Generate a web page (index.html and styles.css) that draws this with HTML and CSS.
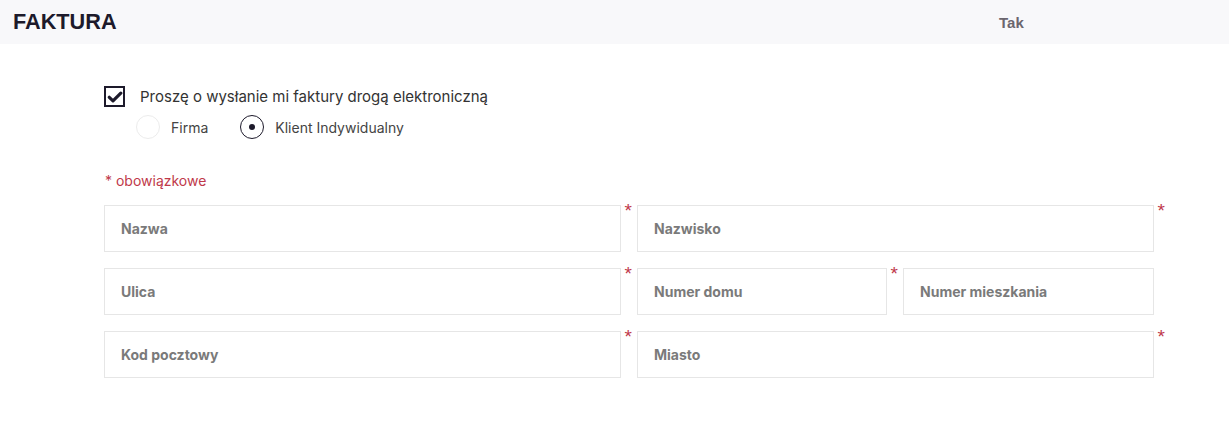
FILE: index.html
```html
<!DOCTYPE html>
<html lang="pl">
<head>
<meta charset="utf-8">
<title>Faktura</title>
<link rel="stylesheet" href="styles.css">
</head>
<body>
<header class="bar">
  <h1 class="bar-title">FAKTURA</h1>
  <span class="bar-value">Tak</span>
</header>
<main class="content">
  <label class="check-row">
    <span class="checkbox">
      <svg viewBox="0 0 16 16" width="16" height="16"><path d="M2.3 8.3 L6 11.8 L13.8 4.2" fill="none" stroke="#1d1a2b" stroke-width="3.2" stroke-linecap="round" stroke-linejoin="round"/></svg>
    </span>
    <span class="check-text">Proszę o wysłanie mi faktury drogą elektroniczną</span>
  </label>
  <div class="radios">
    <label class="radio-item"><span class="radio"></span><span class="radio-text">Firma</span></label>
    <label class="radio-item"><span class="radio radio-on"><span class="dot"></span></span><span class="radio-text">Klient Indywidualny</span></label>
  </div>
  <p class="required-note">* obowiązkowe</p>
  <div class="fields">
    <div class="field req"><span class="ph">Nazwa</span></div>
    <div class="field req"><span class="ph">Nazwisko</span></div>
    <div class="field req"><span class="ph">Ulica</span></div>
    <div class="pair">
      <div class="field req"><span class="ph">Numer domu</span></div>
      <div class="field"><span class="ph">Numer mieszkania</span></div>
    </div>
    <div class="field req"><span class="ph">Kod pocztowy</span></div>
    <div class="field req"><span class="ph">Miasto</span></div>
  </div>
</main>
</body>
</html>
```
FILE: styles.css
```css
* { box-sizing: border-box; }
body {
  margin: 0;
  background: #ffffff;
  font-family: Inter, "Liberation Sans", sans-serif;
  color: #333;
}
.bar {
  height: 44px;
  background: #f8f8fa;
  display: flex;
  align-items: center;
  padding-left: 13px;
}
.bar-title {
  margin: 0;
  font-family: "Liberation Sans", Arial, sans-serif;
  font-size: 21.7px;
  font-weight: 700;
  color: #1d1a2b;
  width: 986px;
}
.bar-value {
  font-family: "Liberation Sans", Arial, sans-serif;
  font-size: 15px;
  font-weight: 700;
  color: #6b666e;
}
.content {
  padding: 42px 0 0 104px;
  width: 1155px;
}
.check-row {
  display: flex;
  align-items: center;
  height: 21px;
}
.checkbox {
  width: 21px;
  height: 21px;
  border: 2px solid #1d1a2b;
  display: flex;
  align-items: center;
  justify-content: center;
  margin-right: 15px;
}
.check-text {
  font-size: 15px;
  color: #333;
}
.radios {
  display: flex;
  align-items: center;
  margin-top: 8px;
  padding-left: 32px;
  gap: 32px;
}
.radio-item {
  display: flex;
  align-items: center;
}
.radio {
  width: 24px;
  height: 24px;
  border-radius: 50%;
  border: 1px solid #ececec;
  margin-right: 11px;
  display: flex;
  align-items: center;
  justify-content: center;
}
.radio-on { border: 1.5px solid #1d1a2b; }
.dot {
  width: 6px;
  height: 6px;
  border-radius: 50%;
  background: #1d1a2b;
}
.radio-text {
  font-size: 14px;
  color: #444;
}
.required-note {
  margin: 33px 0 0 1px;
  font-size: 14px;
  color: #c0394a;
}
.fields {
  margin-top: 16px;
  display: grid;
  grid-template-columns: 517px 517px;
  column-gap: 16px;
  row-gap: 16px;
}
.pair {
  display: grid;
  grid-template-columns: 250px 251px;
  column-gap: 16px;
}
.field {
  position: relative;
  height: 47px;
  border: 1px solid #e6e6e6;
  display: flex;
  align-items: center;
  padding-left: 16px;
}
.field.req::after {
  content: "*";
  position: absolute;
  right: -12px;
  top: -6px;
  color: #c0394a;
  font-size: 19px;
  font-family: "Liberation Sans", Arial, sans-serif;
}
.ph {
  font-size: 14px;
  font-weight: 700;
  color: #7a7a7a;
}
```
